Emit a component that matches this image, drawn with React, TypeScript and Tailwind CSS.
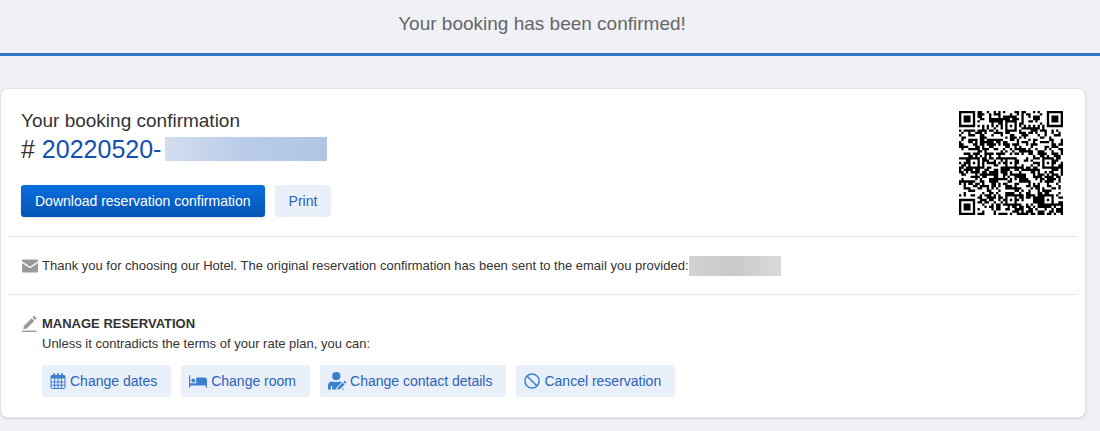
import type { ReactNode } from "react"

const QR_SIZE = 45
const ALIGNMENT = [6, 22, 38]

const ring = (dx: number, dy: number) => Math.max(Math.abs(dx), Math.abs(dy))

const noise = (x: number, y: number) => {
  const n = Math.sin(x * 12.9898 + y * 78.233) * 43758.5453
  return n - Math.floor(n)
}

const isDark = (x: number, y: number) => {
  // finder squares sit in three of the corners
  for (const [cx, cy] of [[3, 3], [QR_SIZE - 4, 3], [3, QR_SIZE - 4]]) {
    const d = ring(x - cx, y - cy)
    if (d <= 4) return d !== 2 && d !== 4
  }
  for (const cx of ALIGNMENT) {
    for (const cy of ALIGNMENT) {
      const inFinder = (cx === 6 && cy !== 22) || (cy === 6 && cx === 38)
      const d = ring(x - cx, y - cy)
      if (!inFinder && d <= 2) return d !== 1
    }
  }
  if (x === 6) return y % 2 === 0
  if (y === 6) return x % 2 === 0
  return noise(x, y) + 0.5 * noise(x >> 1, y >> 1) < 0.77
}

const QrCode = () => {
  let path = ""
  for (let y = 0; y < QR_SIZE; y++) {
    for (let x = 0; x < QR_SIZE; x++) {
      if (isDark(x, y)) path += `M${x} ${y}h1v1h-1z`
    }
  }

  return (
    <svg
      className="h-[104px] w-[104px] shrink-0"
      viewBox={`0 0 ${QR_SIZE} ${QR_SIZE}`}
      role="img"
      aria-label="Booking QR code"
    >
      <path d={path} fill="#000" />
    </svg>
  )
}

const MailIcon = () => (
  <svg className="h-4 w-4 shrink-0" viewBox="0 0 16 16" aria-hidden="true">
    <rect y="1.5" width="16" height="13" rx="1" fill="#9a9a9a" />
    <path d="M0 4.2 8 9.5 16 4.2" fill="none" stroke="#fff" strokeWidth="1.4" />
  </svg>
)

const PencilIcon = () => (
  <svg className="mt-0.5 h-4 w-4 shrink-0" viewBox="0 0 16 16" fill="#999" aria-hidden="true">
    <path d="M1.2 13.2 2.1 9.8 9.6 2.3l2.6 2.6-7.5 7.5zM10.4 1.5 11.6.3q.5-.4 1 0l1.6 1.6q.4.5 0 1L13 4.1z" />
    <path d="M0 14.6h14.6V16H0z" />
  </svg>
)

const CalendarIcon = () => (
  <svg className="h-4 w-4" viewBox="0 0 16 16" aria-hidden="true">
    <path d="M2 2.5h12q1 0 1 1v11q0 1-1 1H2q-1 0-1-1v-11q0-1 1-1z" fill="none" stroke="currentColor" />
    <path d="M1 2.5h14v3H1z" fill="currentColor" />
    <path d="M4 .2v3M8 .2v3M12 .2v3" stroke="currentColor" strokeWidth="1.8" />
    <path d="M4.6 5v10.5M8 5v10.5M11.4 5v10.5M1 9h14M1 12.2h14" stroke="currentColor" />
  </svg>
)

const BedIcon = () => (
  <svg className="h-4 w-[18px]" viewBox="0 0 18 16" fill="currentColor" aria-hidden="true">
    <path d="M0 2.2h1.2v8h6V4.4h8q2.8 0 2.8 2.8v7.6h-1.2v-2.2H1.2v2.2H0z" />
    <circle cx="4.3" cy="7.4" r="2" />
  </svg>
)

const UserEditIcon = () => (
  <svg className="h-[18px] w-[18px]" viewBox="0 0 18 18" fill="currentColor" aria-hidden="true">
    <circle cx="8.3" cy="4.2" r="4.1" />
    <path d="M0 17.6V14q0-4.2 4.2-4.4 3.8 1 7.8 0 1.2.1 1.9.6L8.8 15.3 8.2 17.6H4.2V14H2.9V17.6z" />
    <path d="m9.4 17.8.7-2.5 4.6-4.6 1.9 1.9-4.6 4.5zM15.3 10l1-1q.4-.3.8 0l1 1q.4.4 0 .8l-1 1zM13.6 17.8l1.9-1.9v1.9z" />
  </svg>
)

const BanIcon = () => (
  <svg className="h-4 w-4" viewBox="0 0 16 16" fill="none" stroke="currentColor" strokeWidth="1.5" aria-hidden="true">
    <circle cx="8" cy="8" r="7.1" />
    <path d="m3 3 10 10" />
  </svg>
)

type ActionProps = {
  icon: ReactNode
  label: string
}

const actions: ActionProps[] = [
  { icon: <CalendarIcon />, label: "Change dates" },
  { icon: <BedIcon />, label: "Change room" },
  { icon: <UserEditIcon />, label: "Change contact details" },
  { icon: <BanIcon />, label: "Cancel reservation" },
]

const ActionButton = ({ icon, label }: ActionProps) => (
  <button
    type="button"
    className="flex h-8 items-center gap-1 rounded-[3px] bg-[#e9f0fa] pr-3.5 pl-2 text-sm text-[#2a62bd]"
  >
    <span className="text-[#3d7fcf]">{icon}</span>
    {label}
  </button>
)

export default function App() {
  return (
    <div className="min-h-screen bg-[#f0f1f6] pb-3 font-['Liberation_Sans',Arial,sans-serif] text-[#333]">
      <header className="border-b-3 border-[#3278cc] pt-2.5 pr-7 pb-[15px] pl-3 text-center">
        <h1 className="text-[19px] leading-7 text-[#666]">Your booking has been confirmed!</h1>
      </header>

      <main className="mt-8 mr-3.5 rounded-lg border border-[#e4e5e9] bg-white px-2 pb-5 shadow-sm">
        <section className="flex items-start justify-between pt-5 pr-3.5 pb-[19px] pl-3">
          <div>
            <h2 className="text-[19px] leading-6">Your booking confirmation</h2>
            <p className="flex items-center text-[25px] leading-8">
              #&nbsp;
              <a href="#booking" className="flex items-center text-[#1450b4]">
                20220520-
                <span className="ml-1 h-6 w-[162px] bg-linear-to-r from-[#d3deef] via-[#b9cbe8] to-[#b0c5e6]" />
              </a>
            </p>
            <div className="mt-5 flex gap-2.5">
              <button
                type="button"
                className="h-8 rounded-[3px] bg-linear-to-b from-[#066fe0] to-[#0754b4] px-3.5 text-sm text-white shadow-sm"
              >
                Download reservation confirmation
              </button>
              <button type="button" className="h-8 rounded-[3px] bg-[#e9f0fa] px-3.5 text-sm text-[#2a62bd]">
                Print
              </button>
            </div>
          </div>
          <div className="pt-0.5">
            <QrCode />
          </div>
        </section>

        <section className="flex items-center border-y border-dotted border-[#d4d4d4] py-[18px] pl-[13px] text-[13px] leading-[21px]">
          <MailIcon />
          <p className="ml-1">
            Thank you for choosing our Hotel. The original reservation confirmation has been sent to the email you
            provided:
          </p>
          <span className="h-5 w-[92px] bg-linear-to-r from-[#d2d2d2] via-[#cacaca] to-[#dadada]" />
        </section>

        <section className="flex gap-1 pt-[19px] pl-[13px]">
          <PencilIcon />
          <div>
            <h3 className="text-[13px] leading-5 font-bold">MANAGE RESERVATION</h3>
            <p className="text-[13px] leading-5">Unless it contradicts the terms of your rate plan, you can:</p>
            <div className="mt-[11px] flex flex-wrap gap-2.5">
              {actions.map((action) => (
                <ActionButton key={action.label} {...action} />
              ))}
            </div>
          </div>
        </section>
      </main>
    </div>
  )
}
